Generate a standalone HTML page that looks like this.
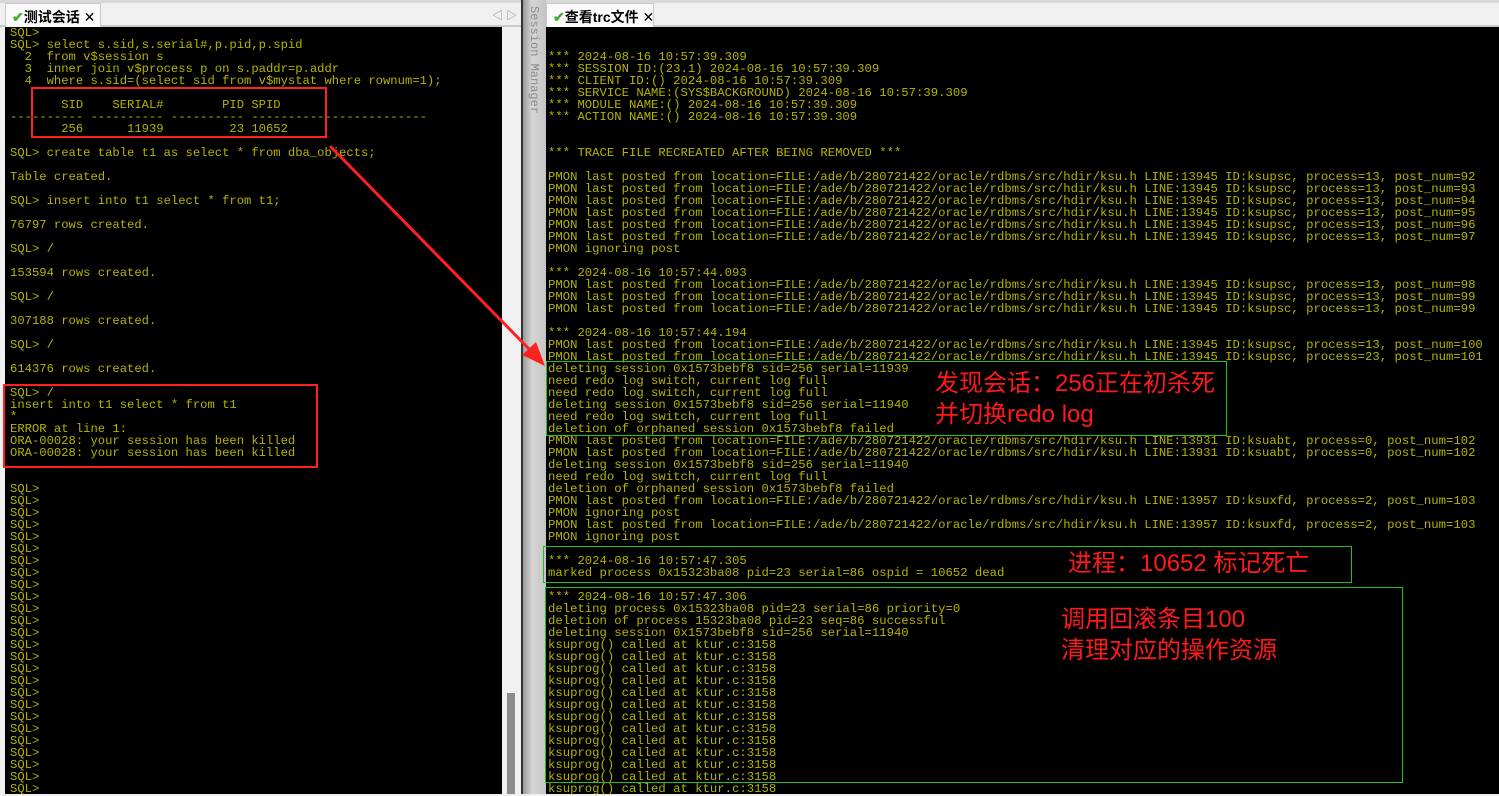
<!DOCTYPE html>
<html><head><meta charset="utf-8"><style>
*{margin:0;padding:0;box-sizing:border-box}
body{width:1499px;height:794px;background:#f0f0f0;position:relative;overflow:hidden;font-family:"Liberation Sans","Noto Sans CJK SC",sans-serif}
.abs{position:absolute}
pre{position:absolute;font-family:"Liberation Mono",monospace;color:#b4b400;line-height:12px;white-space:pre}
.tab{position:absolute;top:3px;height:24px;background:#fafafa;border:1px solid #c8c8c8;border-bottom:none;font-size:14px;font-weight:bold;color:#000;padding:3px 6px 0 6px;font-family:"Liberation Sans","Noto Sans CJK SC",sans-serif;white-space:nowrap}
.tab .ck{color:#3cb030;font-weight:bold}
.red{position:absolute;color:#ff1a1a;font-size:24px;font-family:"Liberation Sans","Noto Sans CJK SC",sans-serif;line-height:32px;white-space:nowrap}
.box{position:absolute;border:1px solid}
</style></head><body>
<div class="abs" style="left:0;top:0;width:1499px;height:3px;background:#d8d8d8"></div>
<div class="abs" style="left:0;top:25px;width:521px;height:2px;background:#c8c8c8"></div>
<div class="abs" style="left:546px;top:25px;width:953px;height:2px;background:#c8c8c8"></div>
<div class="tab" style="left:5px;width:96px"><span class="ck">✔</span>测试会话 <span style="font-weight:normal">✕</span></div>
<div class="abs" style="left:492px;top:7px;font-size:11px;color:#888">◁ ▷</div>
<div class="tab" style="left:546px;width:108px"><span class="ck">✔</span>查看trc文件 <span style="font-weight:normal">✕</span></div>
<div class="abs" style="left:5px;top:27px;width:497px;height:767px;background:#000"></div>
<div class="abs" style="left:502px;top:27px;width:19px;height:767px;background:#f0f0f0"></div>
<div class="abs" style="left:507px;top:693px;width:8px;height:101px;background:#8c8c8c"></div>
<div class="abs" style="left:521px;top:0;width:2px;height:794px;background:#333"></div>
<div class="abs" style="left:523px;top:0;width:23px;height:794px;background:linear-gradient(90deg,#9a9a9a,#d6d6d6 40%,#c4c4c4)"></div>
<div class="abs" style="left:527px;top:6px;font-family:'Liberation Mono',monospace;font-size:12px;color:#888;writing-mode:vertical-rl">Session Manager</div>
<pre style="left:10px;top:27px;font-size:12.2px">SQL>
SQL> select s.sid,s.serial#,p.pid,p.spid
  2  from v$session s
  3  inner join v$process p on s.paddr=p.addr
  4  where s.sid=(select sid from v$mystat where rownum=1);

       SID    SERIAL#        PID SPID
---------- ---------- ---------- ------------------------
       256      11939         23 10652

SQL> create table t1 as select * from dba_objects;

Table created.

SQL> insert into t1 select * from t1;

76797 rows created.

SQL> /

153594 rows created.

SQL> /

307188 rows created.

SQL> /

614376 rows created.

SQL> /
insert into t1 select * from t1
*
ERROR at line 1:
ORA-00028: your session has been killed
ORA-00028: your session has been killed


SQL>
SQL>
SQL>
SQL>
SQL>
SQL>
SQL>
SQL>
SQL>
SQL>
SQL>
SQL>
SQL>
SQL>
SQL>
SQL>
SQL>
SQL>
SQL>
SQL>
SQL>
SQL>
SQL>
SQL>
SQL>
SQL></pre>
<div class="abs" style="left:546px;top:27px;width:953px;height:767px;background:#000"></div>
<pre style="left:548px;top:51px;font-size:12.27px">*** 2024-08-16 10:57:39.309
*** SESSION ID:(23.1) 2024-08-16 10:57:39.309
*** CLIENT ID:() 2024-08-16 10:57:39.309
*** SERVICE NAME:(SYS$BACKGROUND) 2024-08-16 10:57:39.309
*** MODULE NAME:() 2024-08-16 10:57:39.309
*** ACTION NAME:() 2024-08-16 10:57:39.309


*** TRACE FILE RECREATED AFTER BEING REMOVED ***

PMON last posted from location=FILE:/ade/b/280721422/oracle/rdbms/src/hdir/ksu.h LINE:13945 ID:ksupsc, process=13, post_num=92
PMON last posted from location=FILE:/ade/b/280721422/oracle/rdbms/src/hdir/ksu.h LINE:13945 ID:ksupsc, process=13, post_num=93
PMON last posted from location=FILE:/ade/b/280721422/oracle/rdbms/src/hdir/ksu.h LINE:13945 ID:ksupsc, process=13, post_num=94
PMON last posted from location=FILE:/ade/b/280721422/oracle/rdbms/src/hdir/ksu.h LINE:13945 ID:ksupsc, process=13, post_num=95
PMON last posted from location=FILE:/ade/b/280721422/oracle/rdbms/src/hdir/ksu.h LINE:13945 ID:ksupsc, process=13, post_num=96
PMON last posted from location=FILE:/ade/b/280721422/oracle/rdbms/src/hdir/ksu.h LINE:13945 ID:ksupsc, process=13, post_num=97
PMON ignoring post

*** 2024-08-16 10:57:44.093
PMON last posted from location=FILE:/ade/b/280721422/oracle/rdbms/src/hdir/ksu.h LINE:13945 ID:ksupsc, process=13, post_num=98
PMON last posted from location=FILE:/ade/b/280721422/oracle/rdbms/src/hdir/ksu.h LINE:13945 ID:ksupsc, process=13, post_num=99
PMON last posted from location=FILE:/ade/b/280721422/oracle/rdbms/src/hdir/ksu.h LINE:13945 ID:ksupsc, process=13, post_num=99

*** 2024-08-16 10:57:44.194
PMON last posted from location=FILE:/ade/b/280721422/oracle/rdbms/src/hdir/ksu.h LINE:13945 ID:ksupsc, process=13, post_num=100
PMON last posted from location=FILE:/ade/b/280721422/oracle/rdbms/src/hdir/ksu.h LINE:13945 ID:ksupsc, process=23, post_num=101
deleting session 0x1573bebf8 sid=256 serial=11939
need redo log switch, current log full
need redo log switch, current log full
deleting session 0x1573bebf8 sid=256 serial=11940
need redo log switch, current log full
deletion of orphaned session 0x1573bebf8 failed
PMON last posted from location=FILE:/ade/b/280721422/oracle/rdbms/src/hdir/ksu.h LINE:13931 ID:ksuabt, process=0, post_num=102
PMON last posted from location=FILE:/ade/b/280721422/oracle/rdbms/src/hdir/ksu.h LINE:13931 ID:ksuabt, process=0, post_num=102
deleting session 0x1573bebf8 sid=256 serial=11940
need redo log switch, current log full
deletion of orphaned session 0x1573bebf8 failed
PMON last posted from location=FILE:/ade/b/280721422/oracle/rdbms/src/hdir/ksu.h LINE:13957 ID:ksuxfd, process=2, post_num=103
PMON ignoring post
PMON last posted from location=FILE:/ade/b/280721422/oracle/rdbms/src/hdir/ksu.h LINE:13957 ID:ksuxfd, process=2, post_num=103
PMON ignoring post

*** 2024-08-16 10:57:47.305
marked process 0x15323ba08 pid=23 serial=86 ospid = 10652 dead

*** 2024-08-16 10:57:47.306
deleting process 0x15323ba08 pid=23 serial=86 priority=0
deletion of process 15323ba08 pid=23 seq=86 successful
deleting session 0x1573bebf8 sid=256 serial=11940
ksuprog() called at ktur.c:3158
ksuprog() called at ktur.c:3158
ksuprog() called at ktur.c:3158
ksuprog() called at ktur.c:3158
ksuprog() called at ktur.c:3158
ksuprog() called at ktur.c:3158
ksuprog() called at ktur.c:3158
ksuprog() called at ktur.c:3158
ksuprog() called at ktur.c:3158
ksuprog() called at ktur.c:3158
ksuprog() called at ktur.c:3158
ksuprog() called at ktur.c:3158
ksuprog() called at ktur.c:3158</pre>
<div class="box" style="left:31px;top:87px;width:296px;height:51px;border:2px solid #ff2020"></div>
<div class="box" style="left:3px;top:384px;width:315px;height:84px;border:2px solid #ff2020"></div>
<div class="box" style="left:546px;top:361px;width:681px;height:75px;border-color:#22c022"></div>
<div class="box" style="left:543px;top:546px;width:809px;height:37px;border-color:#22c022"></div>
<div class="box" style="left:545px;top:587px;width:858px;height:196px;border-color:#22c022"></div>
<div class="red" style="left:935px;top:368px">发现会话：256正在初杀死</div>
<div class="red" style="left:935px;top:399px">并切换redo log</div>
<div class="red" style="left:1068px;top:548px">进程：10652 标记死亡</div>
<div class="red" style="left:1061px;top:604px">调用回滚条目100</div>
<div class="red" style="left:1061px;top:635px">清理对应的操作资源</div>
<svg class="abs" style="left:0;top:0" width="1499" height="794">
<line x1="330" y1="146" x2="532" y2="352" stroke="#ff2020" stroke-width="3"/>
<polygon points="545,366 522,355 536,342" fill="#ff2020"/>
</svg>
</body></html>
